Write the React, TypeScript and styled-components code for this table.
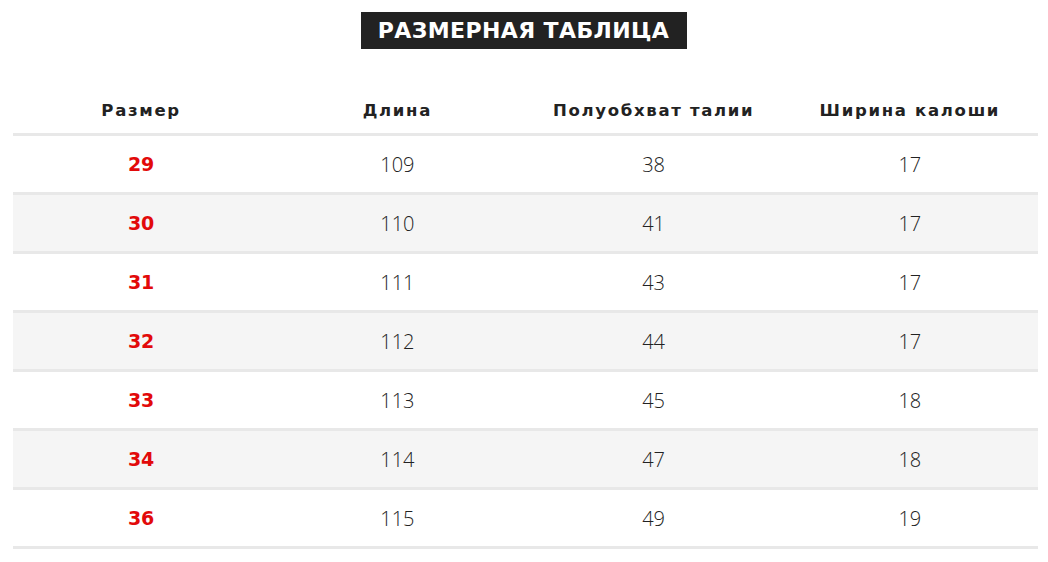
import React from 'react';
import styled, { createGlobalStyle } from 'styled-components';

const GlobalStyle = createGlobalStyle`
  html, body {
    margin: 0;
    padding: 0;
    background: #fff;
  }
  body {
    font-family: "Open Sans", "DejaVu Sans", sans-serif;
    color: #222;
  }
`;

const Page = styled.div`
  padding: 12px 10px 0 13px;
  display: flex;
  flex-direction: column;
  align-items: center;
`;

const Title = styled.h2`
  margin: 0 0 0 -4px;
  background-color: #222;
  color: #fff;
  font-family: "DejaVu Sans", sans-serif;
  font-weight: 700;
  font-size: 22px;
  letter-spacing: 0.4px;
  line-height: 37px;
  padding: 0 6px;
  width: 314px;
  text-align: center;
  white-space: nowrap;
`;

const Table = styled.table`
  margin-top: 41px;
  width: 100%;
  border-collapse: collapse;
  table-layout: fixed;
  > thead th {
    font-family: "DejaVu Sans", sans-serif;
    font-weight: 700;
    font-size: 16.5px;
    letter-spacing: 1.7px;
    color: #222;
    height: 43px;
    padding: 0;
    vertical-align: top;
    line-height: 42px;
    border-bottom: 3px solid #e8e8e8;
  }
  > tbody tr {
    height: 59px;
    &:nth-child(even) {
      background-color: #f5f5f5;
    }
    > td {
      text-align: center;
      border-bottom: 3px solid #e8e8e8;
      padding: 0;
      font-size: 20px;
      font-weight: 300;
      color: #222;
    }
  }
`;

const Size = styled.td`
  && {
    color: #e20a0a;
    font-family: "DejaVu Sans", sans-serif;
    font-weight: 700;
    font-size: 19px;
  }
`;

const rows = [
    ['29', '109', '38', '17'],
    ['30', '110', '41', '17'],
    ['31', '111', '43', '17'],
    ['32', '112', '44', '17'],
    ['33', '113', '45', '18'],
    ['34', '114', '47', '18'],
    ['36', '115', '49', '19'],
];

function App() {
    return (
        <>
            <GlobalStyle/>
            <Page>
                <Title>РАЗМЕРНАЯ ТАБЛИЦА</Title>
                <Table>
                    <thead>
                    <tr>
                        <th>Размер</th>
                        <th>Длина</th>
                        <th>Полуобхват талии</th>
                        <th>Ширина калоши</th>
                    </tr>
                    </thead>
                    <tbody>
                    {rows.map(r => (
                        <tr key={r[0]}>
                            <Size>{r[0]}</Size>
                            <td>{r[1]}</td>
                            <td>{r[2]}</td>
                            <td>{r[3]}</td>
                        </tr>
                    ))}
                    </tbody>
                </Table>
            </Page>
        </>
    );
}

export default App;
